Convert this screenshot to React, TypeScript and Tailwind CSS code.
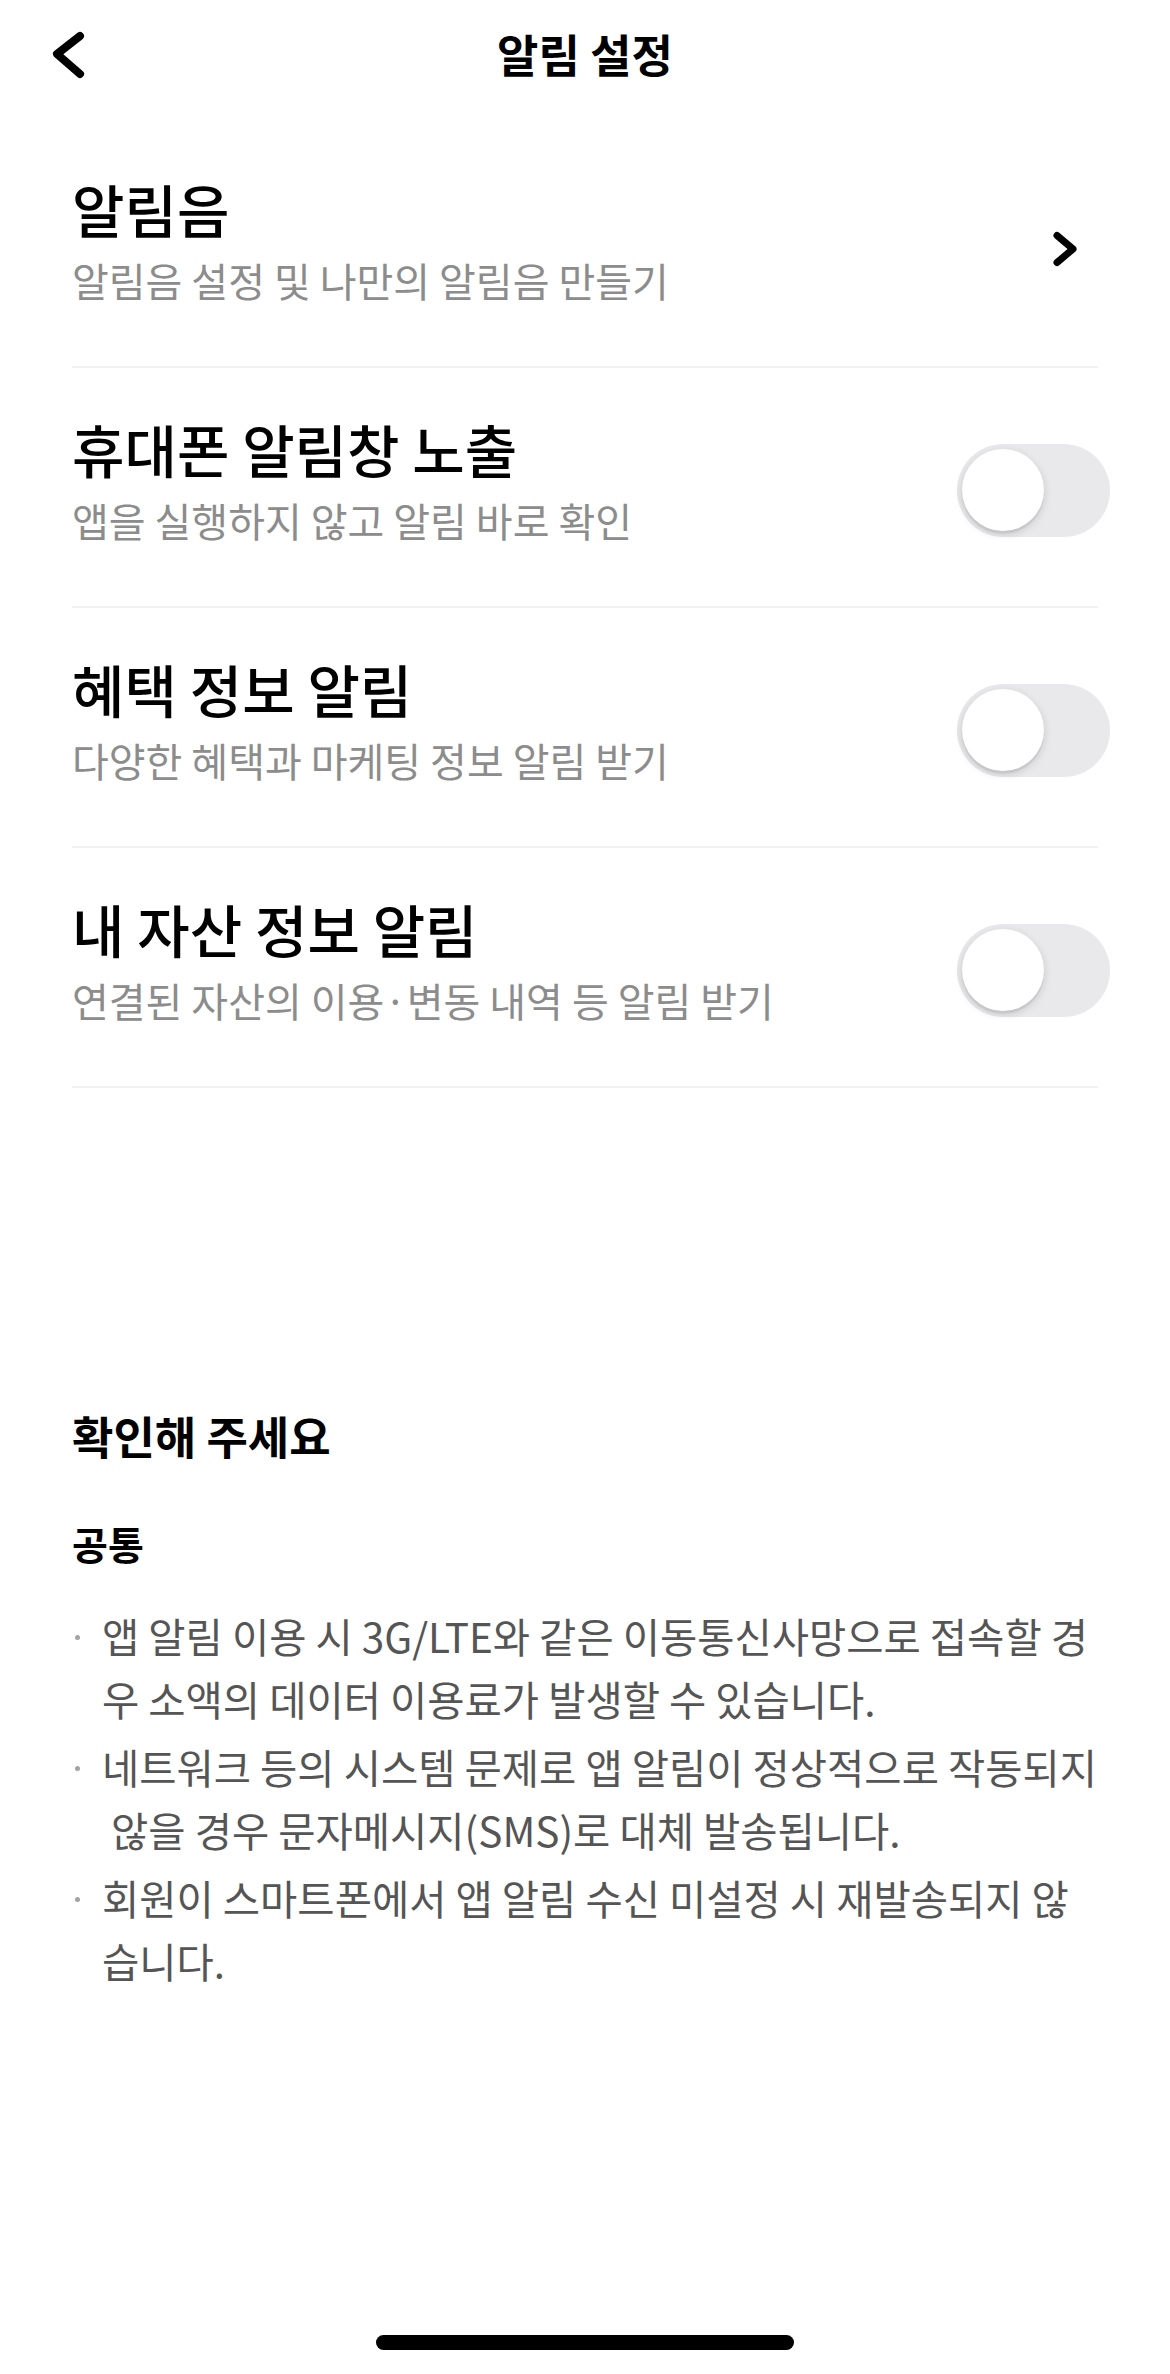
import React from "react";

function Toggle() {
  return (
    <div className="relative mt-[6px] mr-[-12px] h-[93px] w-[153px] shrink-0 rounded-full bg-[#e9e9eb]">
      <div className="absolute left-[5px] top-[5.5px] h-[82px] w-[82px] rounded-full bg-white shadow-[0_3px_8px_rgba(0,0,0,0.15),0_3px_1px_rgba(0,0,0,0.06)]" />
    </div>
  );
}

function Chevron() {
  return (
    <svg
      className="mt-[3px] mr-[19px] shrink-0"
      width="30"
      height="40"
      viewBox="0 0 30 40"
      fill="none"
    >
      <path
        d="M8 6.5 L24 20 L8 33.5"
        stroke="#000"
        strokeWidth="7"
        strokeLinecap="round"
        strokeLinejoin="round"
      />
    </svg>
  );
}

function Row({ title, sub, right }: { title: string; sub: string; right: React.ReactNode }) {
  return (
    <div className="flex h-[240px] items-center border-b-2 border-[#f2f2f2]">
      <div className="flex-1 pb-[12px]">
        <div className="text-[57px] leading-[60px] font-medium text-black whitespace-nowrap">{title}</div>
        <div className="mt-[18px] text-[40px] leading-[48px] text-[#8c8c8c] whitespace-nowrap">{sub}</div>
      </div>
      {right}
    </div>
  );
}

function Bullet({ lines, first }: { lines: string[]; first?: boolean }) {
  return (
    <div className={first ? "flex" : "mt-[5px] flex"}>
      <div className="flex h-[63px] w-[30px] shrink-0 items-center">
        <div className="ml-[3px] mt-[4px] h-[5px] w-[5px] rounded-full bg-[#a3a3a3]" />
      </div>
      <div className="text-[40.5px] leading-[63px] text-[#555555]">
        {lines.map((l, i) => (
          <div key={i} className="whitespace-pre">
            {l}
          </div>
        ))}
      </div>
    </div>
  );
}

export default function App() {
  return (
    <div className="flex h-[2374px] w-full flex-col bg-white font-['Noto_Sans_CJK_KR','Noto_Sans',sans-serif]">
      {/* Header */}
      <div className="grid h-[108px] grid-cols-[1fr_auto_1fr] items-center">
        <div className="flex items-center pl-[50px]">
          <svg width="40" height="50" viewBox="0 0 40 50" fill="none" className="mt-[2px]">
            <path
              d="M30 6 L7 24 L30 44"
              stroke="#000"
              strokeWidth="8"
              strokeLinecap="round"
              strokeLinejoin="round"
            />
          </svg>
        </div>
        <div className="text-[45px] leading-[50px] font-bold text-black">알림 설정</div>
        <div />
      </div>

      {/* List */}
      <div className="mt-[20px] px-[72px]">
        <Row title="알림음" sub="알림음 설정 및 나만의 알림음 만들기" right={<Chevron />} />
        <Row title="휴대폰 알림창 노출" sub="앱을 실행하지 않고 알림 바로 확인" right={<Toggle />} />
        <Row title="혜택 정보 알림" sub="다양한 혜택과 마케팅 정보 알림 받기" right={<Toggle />} />
        <Row title="내 자산 정보 알림" sub="연결된 자산의 이용·변동 내역 등 알림 받기" right={<Toggle />} />
      </div>

      {/* Notice */}
      <div className="mt-[320px] px-[72px]">
        <div className="text-[45px] leading-[56px] font-bold text-black">확인해 주세요</div>
        <div className="mt-[55px] text-[39px] leading-[48px] font-bold text-black">공통</div>
        <div className="mt-[37px]">
          <Bullet
            first
            lines={[
              "앱 알림 이용 시 3G/LTE와 같은 이동통신사망으로 접속할 경",
              "우 소액의 데이터 이용료가 발생할 수 있습니다.",
            ]}
          />
          <Bullet
            lines={[
              "네트워크 등의 시스템 문제로 앱 알림이 정상적으로 작동되지",
              " 않을 경우 문자메시지(SMS)로 대체 발송됩니다.",
            ]}
          />
          <Bullet
            lines={["회원이 스마트폰에서 앱 알림 수신 미설정 시 재발송되지 않", "습니다."]}
          />
        </div>
      </div>

      {/* Home indicator */}
      <div className="mx-auto mt-auto mb-[24px] h-[15px] w-[418px] rounded-full bg-black" />
    </div>
  );
}
